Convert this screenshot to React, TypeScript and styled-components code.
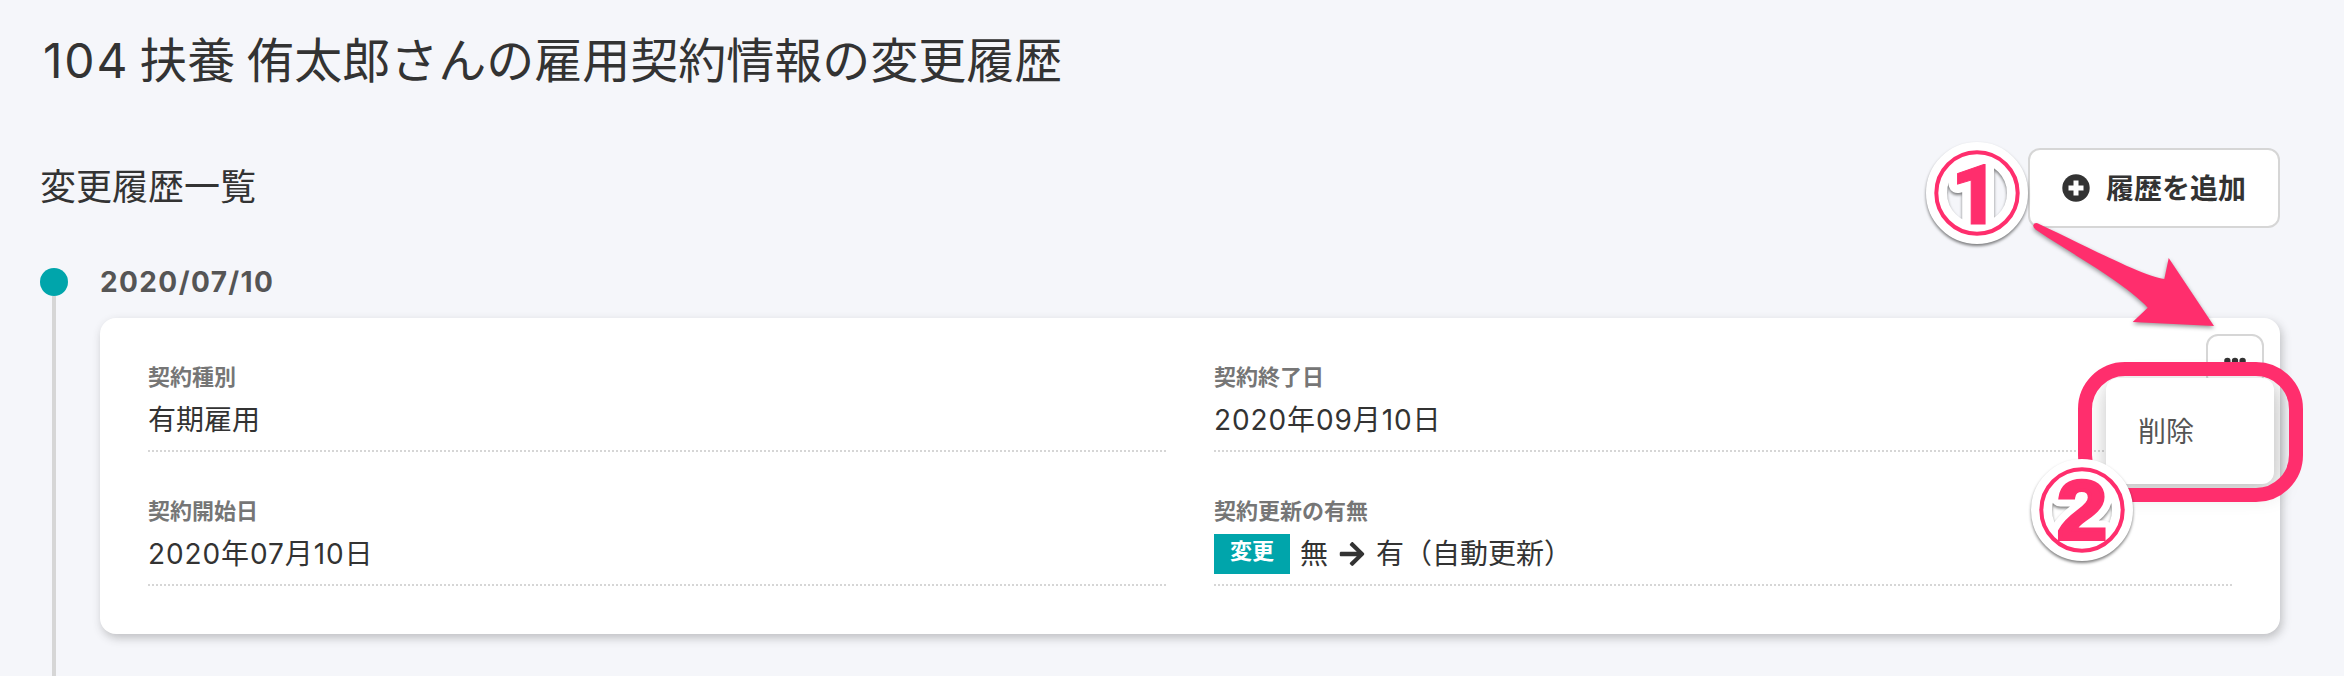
import React from "react";
import styled, { createGlobalStyle } from "styled-components";
import { FaArrowRight } from "react-icons/fa";

const PINK = "#ff2e6d";
const TEAL = "#00a5ab";
const INK = "#333333";

const GlobalStyle = createGlobalStyle`
  * { box-sizing: border-box; }
  body {
    margin: 0;
    background: #f5f6fa;
    color: ${INK};
    font-family: Inter, "Noto Sans CJK JP", sans-serif;
    overflow: hidden;
  }
`;

const Page = styled.main`
  position: relative;
  display: flex;
  flex-direction: column;
  width: 2344px;
  height: 676px;
  padding: 0 64px 0 40px;
  overflow: hidden;
`;

const Title = styled.h1`
  display: flex;
  margin: 0 0 26px;
  padding-left: 3px;
  font-size: 48px;
  line-height: 122px;
  font-weight: 400;
  white-space: pre;
`;

const EmployeeNumber = styled.span`
  margin-right: 10px;
  letter-spacing: 1.8px;
`;

const FamilyName = styled.span`
  margin-right: 11px;
`;

const Toolbar = styled.header`
  display: flex;
  align-items: center;
  justify-content: space-between;
  height: 80px;
`;

const Heading = styled.h2`
  margin: 0;
  padding-bottom: 3px;
  font-size: 36px;
  line-height: 76px;
  font-weight: 400;
`;

const AddButton = styled.button`
  display: flex;
  align-items: center;
  gap: 16px;
  width: 252px;
  height: 80px;
  padding: 2px 0 0 32px;
  border: 2px solid #d6d6d6;
  border-radius: 12px;
  background: #fff;
  color: ${INK};
  font: 700 28px/74px Inter, "Noto Sans CJK JP", sans-serif;
  white-space: nowrap;

  svg {
    margin-top: -2px;
  }
`;

const Timeline = styled.section`
  display: grid;
  grid-template-columns: 28px 1fr;
  column-gap: 32px;
  flex: 1;
  margin-top: 40px;
`;

const Rail = styled.div`
  display: flex;
  flex-direction: column;
  align-items: center;
`;

const Dot = styled.span`
  width: 28px;
  height: 28px;
  border-radius: 50%;
  background: ${TEAL};
`;

const Line = styled.span`
  flex: 1;
  width: 4px;
  background: #d6d6d6;
`;

const Entry = styled.article`
  display: flex;
  flex-direction: column;
  gap: 22px;
`;

const EntryDate = styled.time`
  font-size: 28px;
  line-height: 28px;
  font-weight: 700;
  letter-spacing: 1.4px;
  color: #555;
`;

const Card = styled.div`
  position: relative;
  display: grid;
  grid-template-columns: 1fr 1fr;
  gap: 48px;
  height: 316px;
  padding: 48px;
  border-radius: 16px;
  background: #fff;
  box-shadow: 2px 4px 10px rgba(51, 51, 51, 0.28);
`;

const Field = styled.div`
  height: 86px;
  padding-bottom: 12px;
  background: repeating-linear-gradient(90deg, #d6d6d6 0 2px, transparent 2px 4px) left bottom / 100% 2px no-repeat;
`;

const Label = styled.div`
  margin-bottom: 12px;
  font-size: 22px;
  line-height: 22px;
  font-weight: 700;
  color: #767676;
`;

const Value = styled.div<{ $date?: boolean }>`
  display: flex;
  align-items: center;
  height: 40px;
  font-size: 28px;
  line-height: 40px;
  letter-spacing: ${(p) => (p.$date ? "0.9px" : "normal")};
  white-space: nowrap;
`;

const ChangeTag = styled.span`
  width: 76px;
  height: 40px;
  margin-right: 10px;
  background: ${TEAL};
  color: #fff;
  font-size: 22px;
  line-height: 35px;
  font-weight: 700;
  text-align: center;
`;

const ChangeArrow = styled(FaArrowRight)`
  width: 26px;
  height: 28px;
  margin: 0 11px;
`;

const MoreButton = styled.button`
  position: absolute;
  top: 16px;
  right: 16px;
  display: flex;
  align-items: center;
  justify-content: center;
  width: 58px;
  height: 54px;
  padding: 0;
  border: 2px solid #d6d6d6;
  border-radius: 12px;
  background: #fff;
`;

const Menu = styled.div`
  position: absolute;
  top: 60px;
  right: 6px;
  width: 168px;
  height: 106px;
  padding-left: 32px;
  border-radius: 12px;
  background: #fff;
  box-shadow: 2px 6px 22px rgba(51, 51, 51, 0.34);
  color: #555;
  font-size: 28px;
  line-height: 108px;
`;

const Highlight = styled.div`
  position: absolute;
  left: 2078px;
  top: 362px;
  width: 225px;
  height: 140px;
  border: 14px solid ${PINK};
  border-radius: 47px;
`;

const Pointer = styled.svg`
  position: absolute;
  left: 2020px;
  top: 210px;
  filter: drop-shadow(0 2px 2px rgba(0, 0, 0, 0.4));
`;

const Marker = styled.svg<{ $x: number; $y: number; $font: string; $weight: number }>`
  position: absolute;
  left: ${(p) => p.$x - 60}px;
  top: ${(p) => p.$y - 60}px;
  font-family: ${(p) => p.$font}, sans-serif;
  font-weight: ${(p) => p.$weight};
  font-size: 84px;
`;

const Halo = styled.g`
  filter: drop-shadow(0 2px 1.5px rgba(0, 0, 0, 0.5));
`;

type StepMarkerProps = {
  x: number;
  y: number;
  digit: string;
  font: string;
  weight: number;
  place: string;
  bold: number;
};

function StepMarker({ x, y, digit, font, weight, place, bold }: StepMarkerProps) {
  return (
    <Marker $x={x} $y={y} $font={font} $weight={weight} width="120" height="120" viewBox="0 0 120 120">
      <Halo>
        <circle cx="60" cy="60" r="40.5" fill="none" stroke="#fff" strokeWidth="21" />
        <text transform={place} textAnchor="middle" fill="#fff" stroke="#fff" strokeWidth="18" strokeLinejoin="round">
          {digit}
        </text>
      </Halo>
      <circle cx="60" cy="60" r="40.7" fill="none" stroke={PINK} strokeWidth="4" />
      <text transform={place} textAnchor="middle" fill={PINK} stroke={PINK} strokeWidth={bold}>
        {digit}
      </text>
    </Marker>
  );
}

export default function App() {
  return (
    <>
      <GlobalStyle />
      <Page>
        <Title>
          <EmployeeNumber>104</EmployeeNumber>
          <FamilyName>扶養</FamilyName>
          侑太郎さんの雇用契約情報の変更履歴
        </Title>
        <Toolbar>
          <Heading>変更履歴一覧</Heading>
          <AddButton>
            <svg width="28" height="28" viewBox="0 0 28 28">
              <circle cx="14" cy="14" r="13.7" fill={INK} />
              <path d="M14 6.5v15M6.5 14h15" stroke="#fff" strokeWidth="5" />
            </svg>
            履歴を追加
          </AddButton>
        </Toolbar>
        <Timeline>
          <Rail>
            <Dot />
            <Line />
          </Rail>
          <Entry>
            <EntryDate>2020/07/10</EntryDate>
            <Card>
              <Field>
                <Label>契約種別</Label>
                <Value>有期雇用</Value>
              </Field>
              <Field>
                <Label>契約終了日</Label>
                <Value $date>2020年09月10日</Value>
              </Field>
              <Field>
                <Label>契約開始日</Label>
                <Value $date>2020年07月10日</Value>
              </Field>
              <Field>
                <Label>契約更新の有無</Label>
                <Value>
                  <ChangeTag>変更</ChangeTag>
                  無<ChangeArrow />有（自動更新）
                </Value>
              </Field>
              <MoreButton aria-label="メニュー">
                <svg width="22" height="8" viewBox="0 0 22 8" fill={INK}>
                  <circle cx="3.4" cy="4" r="3.2" />
                  <circle cx="11" cy="4" r="3.2" />
                  <circle cx="18.6" cy="4" r="3.2" />
                </svg>
              </MoreButton>
              <Menu>削除</Menu>
            </Card>
          </Entry>
        </Timeline>
        <Highlight />
        <Pointer width="210" height="130" viewBox="2020 210 210 130">
          <path
            d="M2037.5 223.2Q2034 222.5 2033.2 225.5Q2033 227.5 2035.5 229.5C2060 246 2086 261 2108 276C2126 288 2141 300 2147.7 307.7L2132.7 322L2214 326L2168.7 258L2164.3 279C2145 277 2090 248 2037.5 223.2Z"
            fill={PINK}
          />
        </Pointer>
        <StepMarker
          x={1977.3}
          y={193}
          digit="1"
          font="Roboto"
          weight={900}
          place="translate(58 90.6)"
          bold={1}
        />
        <StepMarker
          x={2082.3}
          y={510}
          digit="2"
          font='"Liberation Sans"'
          weight={700}
          place="translate(60 88.5) scale(1.07 1)"
          bold={4}
        />
      </Page>
    </>
  );
}
